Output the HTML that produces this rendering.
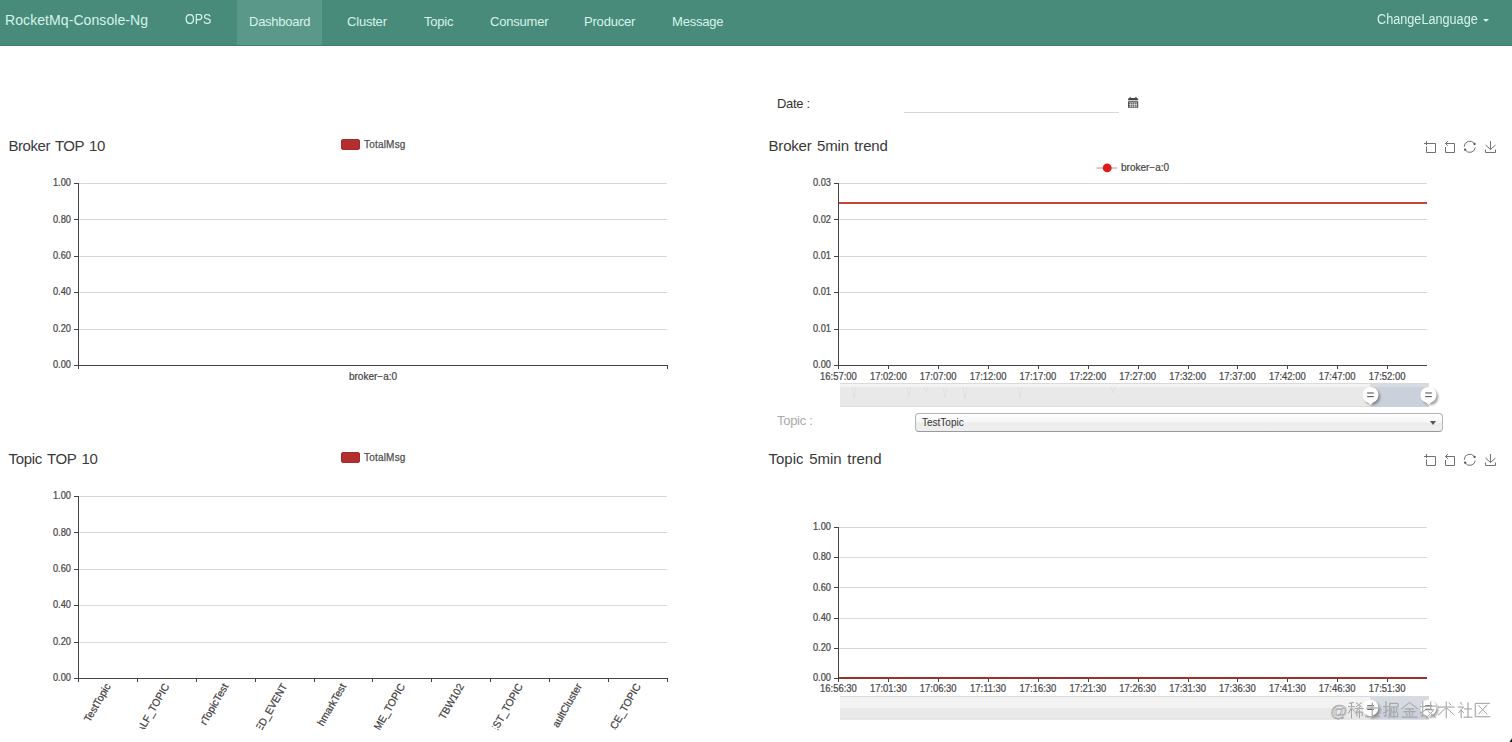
<!DOCTYPE html>
<html><head><meta charset="utf-8"><style>
html,body{margin:0;padding:0;background:#fff;}
body{width:1512px;height:742px;overflow:hidden;position:relative;font-family:'Liberation Sans', sans-serif;}
.nav{position:absolute;left:0;top:0;width:1512px;height:45px;background:#488b7a;border-bottom:1px solid #3f806d;}
.nav .act{position:absolute;left:237px;top:0;width:85px;height:45px;background:#5a9889;}
.t{position:absolute;white-space:nowrap;line-height:1;}
.nt{color:#d6f4ea;font-size:13px;}
.title{color:#3a3a3a;font-size:15px;}
.lg{color:#505050;font-size:10px;letter-spacing:0.2px;-webkit-text-stroke:0.25px #505050;}
</style></head><body>
<div class="nav"><div class="act"></div></div>
<div class="t nt" style="left:5px;top:12.5px;font-size:14px;letter-spacing:0.08px">RocketMq-Console-Ng</div>
<div class="t nt" style="left:185.4px;top:12.1px;font-size:14px;transform:scaleX(0.89);transform-origin:0 0">OPS</div>
<div class="t nt" style="left:249px;top:14.5px;letter-spacing:-0.25px">Dashboard</div>
<div class="t nt" style="left:347px;top:14.5px;letter-spacing:-0.2px">Cluster</div>
<div class="t nt" style="left:424px;top:14.5px;letter-spacing:-0.2px">Topic</div>
<div class="t nt" style="left:490px;top:14.5px;letter-spacing:-0.2px">Consumer</div>
<div class="t nt" style="left:584px;top:14.5px;letter-spacing:-0.2px">Producer</div>
<div class="t nt" style="left:672px;top:14.5px;letter-spacing:-0.2px">Message</div>
<div class="t nt" style="left:1377px;top:12px;font-size:14px;transform:scaleX(0.905);transform-origin:0 0">ChangeLanguage</div>
<div style="position:absolute;left:1483px;top:19px;width:0;height:0;border-left:3px solid transparent;border-right:3px solid transparent;border-top:3px solid #d6f4ea"></div>

<div class="t" style="left:777px;top:97px;font-size:13px;color:#333;letter-spacing:-0.3px">Date :</div>
<div style="position:absolute;left:904px;top:112px;width:215px;height:1px;background:#d8d8d8"></div>
<div class="t" style="left:8.5px;top:138.3px;letter-spacing:-0.45px;word-spacing:1.5px"><span class="title">Broker TOP 10</span></div>
<div class="t" style="left:768.5px;top:138.3px;letter-spacing:-0.18px;word-spacing:1.5px"><span class="title">Broker 5min trend</span></div>
<div class="t" style="left:8.5px;top:451.3px;letter-spacing:-0.33px;word-spacing:1.5px"><span class="title">Topic TOP 10</span></div>
<div class="t" style="left:768.5px;top:451.3px;word-spacing:1.5px"><span class="title">Topic 5min trend</span></div>
<div style="position:absolute;left:341px;top:139px;width:19px;height:11px;background:#b32e2e;box-shadow:inset 0 0 0 0.6px #9c2424;border-radius:3px"></div>
<div class="t lg" style="left:364px;top:140.2px">TotalMsg</div>
<div style="position:absolute;left:341px;top:452px;width:19px;height:11px;background:#b32e2e;box-shadow:inset 0 0 0 0.6px #9c2424;border-radius:3px"></div>
<div class="t lg" style="left:364px;top:453px">TotalMsg</div>
<div class="t" style="left:777px;top:414px;font-size:13px;color:#aaa;letter-spacing:-0.3px">Topic :</div>
<div style="position:absolute;left:915px;top:413px;width:526px;height:17px;border:1px solid #b4b4b4;border-bottom-color:#9a9a9a;border-radius:4px;background:linear-gradient(#fff 0%,#f6f6f6 45%,#ececec 55%,#efefef 100%)"></div>
<div class="t" style="left:922px;top:417.5px;font-size:10px;color:#333">TestTopic</div>
<div style="position:absolute;left:1429.5px;top:420.5px;width:0;height:0;border-left:3px solid transparent;border-right:3px solid transparent;border-top:4px solid #555"></div>
<svg width="1512" height="742" style="position:absolute;left:0;top:0" font-family="Liberation Sans, sans-serif"><line x1="79" y1="183.5" x2="667" y2="183.5" stroke="#d8d8d8" stroke-width="1"/><line x1="74" y1="183.5" x2="78" y2="183.5" stroke="#444" stroke-width="1"/><text transform="translate(71.00,186.20) scale(0.93,1)" text-anchor="end" font-size="10" fill="#4a4a4a" stroke="#4a4a4a" stroke-width="0.25" >1.00</text><line x1="79" y1="219.5" x2="667" y2="219.5" stroke="#d8d8d8" stroke-width="1"/><line x1="74" y1="219.5" x2="78" y2="219.5" stroke="#444" stroke-width="1"/><text transform="translate(71.00,222.60) scale(0.93,1)" text-anchor="end" font-size="10" fill="#4a4a4a" stroke="#4a4a4a" stroke-width="0.25" >0.80</text><line x1="79" y1="256.5" x2="667" y2="256.5" stroke="#d8d8d8" stroke-width="1"/><line x1="74" y1="256.5" x2="78" y2="256.5" stroke="#444" stroke-width="1"/><text transform="translate(71.00,259.00) scale(0.93,1)" text-anchor="end" font-size="10" fill="#4a4a4a" stroke="#4a4a4a" stroke-width="0.25" >0.60</text><line x1="79" y1="292.5" x2="667" y2="292.5" stroke="#d8d8d8" stroke-width="1"/><line x1="74" y1="292.5" x2="78" y2="292.5" stroke="#444" stroke-width="1"/><text transform="translate(71.00,295.40) scale(0.93,1)" text-anchor="end" font-size="10" fill="#4a4a4a" stroke="#4a4a4a" stroke-width="0.25" >0.40</text><line x1="79" y1="329.5" x2="667" y2="329.5" stroke="#d8d8d8" stroke-width="1"/><line x1="74" y1="329.5" x2="78" y2="329.5" stroke="#444" stroke-width="1"/><text transform="translate(71.00,331.80) scale(0.93,1)" text-anchor="end" font-size="10" fill="#4a4a4a" stroke="#4a4a4a" stroke-width="0.25" >0.20</text><line x1="74" y1="365.5" x2="78" y2="365.5" stroke="#444" stroke-width="1"/><text transform="translate(71.00,368.20) scale(0.93,1)" text-anchor="end" font-size="10" fill="#4a4a4a" stroke="#4a4a4a" stroke-width="0.25" >0.00</text><line x1="78.5" y1="183" x2="78.5" y2="365.5" stroke="#444" stroke-width="1"/><line x1="78" y1="365.5" x2="667" y2="365.5" stroke="#444" stroke-width="1"/><line x1="78.5" y1="365" x2="78.5" y2="369" stroke="#444"/><line x1="667.5" y1="365" x2="667.5" y2="369" stroke="#444"/><text x="373" y="379.5" text-anchor="middle" font-size="10" fill="#444" stroke="#444" stroke-width="0.2">broker−a:0</text><line x1="79" y1="496.5" x2="667" y2="496.5" stroke="#d8d8d8" stroke-width="1"/><line x1="74" y1="496.5" x2="78" y2="496.5" stroke="#444" stroke-width="1"/><text transform="translate(71.00,499.20) scale(0.93,1)" text-anchor="end" font-size="10" fill="#4a4a4a" stroke="#4a4a4a" stroke-width="0.25" >1.00</text><line x1="79" y1="532.5" x2="667" y2="532.5" stroke="#d8d8d8" stroke-width="1"/><line x1="74" y1="532.5" x2="78" y2="532.5" stroke="#444" stroke-width="1"/><text transform="translate(71.00,535.60) scale(0.93,1)" text-anchor="end" font-size="10" fill="#4a4a4a" stroke="#4a4a4a" stroke-width="0.25" >0.80</text><line x1="79" y1="569.5" x2="667" y2="569.5" stroke="#d8d8d8" stroke-width="1"/><line x1="74" y1="569.5" x2="78" y2="569.5" stroke="#444" stroke-width="1"/><text transform="translate(71.00,572.00) scale(0.93,1)" text-anchor="end" font-size="10" fill="#4a4a4a" stroke="#4a4a4a" stroke-width="0.25" >0.60</text><line x1="79" y1="605.5" x2="667" y2="605.5" stroke="#d8d8d8" stroke-width="1"/><line x1="74" y1="605.5" x2="78" y2="605.5" stroke="#444" stroke-width="1"/><text transform="translate(71.00,608.40) scale(0.93,1)" text-anchor="end" font-size="10" fill="#4a4a4a" stroke="#4a4a4a" stroke-width="0.25" >0.40</text><line x1="79" y1="642.5" x2="667" y2="642.5" stroke="#d8d8d8" stroke-width="1"/><line x1="74" y1="642.5" x2="78" y2="642.5" stroke="#444" stroke-width="1"/><text transform="translate(71.00,644.80) scale(0.93,1)" text-anchor="end" font-size="10" fill="#4a4a4a" stroke="#4a4a4a" stroke-width="0.25" >0.20</text><line x1="74" y1="678.5" x2="78" y2="678.5" stroke="#444" stroke-width="1"/><text transform="translate(71.00,681.20) scale(0.93,1)" text-anchor="end" font-size="10" fill="#4a4a4a" stroke="#4a4a4a" stroke-width="0.25" >0.00</text><line x1="78.5" y1="496" x2="78.5" y2="678.5" stroke="#444" stroke-width="1"/><line x1="78" y1="678.5" x2="667" y2="678.5" stroke="#444" stroke-width="1"/><defs><filter id="bl" x="-50%" y="-50%" width="200%" height="200%"><feGaussianBlur stdDeviation="1.1"/></filter><clipPath id="lc"><rect x="-52.5" y="-12" width="53.5" height="24"/></clipPath></defs><line x1="78.5" y1="678" x2="78.5" y2="682" stroke="#444"/><line x1="137.5" y1="678" x2="137.5" y2="682" stroke="#444"/><line x1="196.5" y1="678" x2="196.5" y2="682" stroke="#444"/><line x1="255.5" y1="678" x2="255.5" y2="682" stroke="#444"/><line x1="314.5" y1="678" x2="314.5" y2="682" stroke="#444"/><line x1="372.5" y1="678" x2="372.5" y2="682" stroke="#444"/><line x1="431.5" y1="678" x2="431.5" y2="682" stroke="#444"/><line x1="490.5" y1="678" x2="490.5" y2="682" stroke="#444"/><line x1="549.5" y1="678" x2="549.5" y2="682" stroke="#444"/><line x1="608.5" y1="678" x2="608.5" y2="682" stroke="#444"/><line x1="667.5" y1="678" x2="667.5" y2="682" stroke="#444"/><g transform="translate(107.7,684.2) rotate(-60) scale(0.97,1)"><g clip-path="url(#lc)"><text x="0" y="3.8" text-anchor="end" font-size="10.5" fill="#404040" stroke="#404040" stroke-width="0.22">TestTopic</text></g></g><g transform="translate(166.5,684.2) rotate(-60) scale(0.97,1)"><g clip-path="url(#lc)"><text x="0" y="3.8" text-anchor="end" font-size="10.5" fill="#404040" stroke="#404040" stroke-width="0.22">RMQ_SYS_TRANS_HALF_TOPIC</text></g></g><g transform="translate(225.4,684.2) rotate(-60) scale(0.97,1)"><g clip-path="url(#lc)"><text x="0" y="3.8" text-anchor="end" font-size="10.5" fill="#404040" stroke="#404040" stroke-width="0.22">rTopicTest</text></g></g><g transform="translate(284.3,684.2) rotate(-60) scale(0.97,1)"><g clip-path="url(#lc)"><text x="0" y="3.8" text-anchor="end" font-size="10.5" fill="#404040" stroke="#404040" stroke-width="0.22">OFFSET_MOVED_EVENT</text></g></g><g transform="translate(343.2,684.2) rotate(-60) scale(0.97,1)"><g clip-path="url(#lc)"><text x="0" y="3.8" text-anchor="end" font-size="10.5" fill="#404040" stroke="#404040" stroke-width="0.22">hmarkTest</text></g></g><g transform="translate(402.1,684.2) rotate(-60) scale(0.97,1)"><g clip-path="url(#lc)"><text x="0" y="3.8" text-anchor="end" font-size="10.5" fill="#404040" stroke="#404040" stroke-width="0.22">SCHEDULE_TIME_TOPIC</text></g></g><g transform="translate(461.0,684.2) rotate(-60) scale(0.97,1)"><g clip-path="url(#lc)"><text x="0" y="3.8" text-anchor="end" font-size="10.5" fill="#404040" stroke="#404040" stroke-width="0.22">TBW102</text></g></g><g transform="translate(520.0,684.2) rotate(-60) scale(0.97,1)"><g clip-path="url(#lc)"><text x="0" y="3.8" text-anchor="end" font-size="10.5" fill="#404040" stroke="#404040" stroke-width="0.22">SELF_TEST_TOPIC</text></g></g><g transform="translate(578.9,684.2) rotate(-60) scale(0.97,1)"><g clip-path="url(#lc)"><text x="0" y="3.8" text-anchor="end" font-size="10.5" fill="#404040" stroke="#404040" stroke-width="0.22">aultCluster</text></g></g><g transform="translate(637.8,684.2) rotate(-60) scale(0.97,1)"><g clip-path="url(#lc)"><text x="0" y="3.8" text-anchor="end" font-size="10.5" fill="#404040" stroke="#404040" stroke-width="0.22">RMQ_SYS_TRACE_TOPIC</text></g></g><line x1="839" y1="183.5" x2="1427" y2="183.5" stroke="#d8d8d8" stroke-width="1"/><line x1="834" y1="183.5" x2="838" y2="183.5" stroke="#444" stroke-width="1"/><text transform="translate(831.00,186.20) scale(0.93,1)" text-anchor="end" font-size="10" fill="#4a4a4a" stroke="#4a4a4a" stroke-width="0.25" >0.03</text><line x1="839" y1="219.5" x2="1427" y2="219.5" stroke="#d8d8d8" stroke-width="1"/><line x1="834" y1="219.5" x2="838" y2="219.5" stroke="#444" stroke-width="1"/><text transform="translate(831.00,222.60) scale(0.93,1)" text-anchor="end" font-size="10" fill="#4a4a4a" stroke="#4a4a4a" stroke-width="0.25" >0.02</text><line x1="839" y1="256.5" x2="1427" y2="256.5" stroke="#d8d8d8" stroke-width="1"/><line x1="834" y1="256.5" x2="838" y2="256.5" stroke="#444" stroke-width="1"/><text transform="translate(831.00,259.00) scale(0.93,1)" text-anchor="end" font-size="10" fill="#4a4a4a" stroke="#4a4a4a" stroke-width="0.25" >0.01</text><line x1="839" y1="292.5" x2="1427" y2="292.5" stroke="#d8d8d8" stroke-width="1"/><line x1="834" y1="292.5" x2="838" y2="292.5" stroke="#444" stroke-width="1"/><text transform="translate(831.00,295.40) scale(0.93,1)" text-anchor="end" font-size="10" fill="#4a4a4a" stroke="#4a4a4a" stroke-width="0.25" >0.01</text><line x1="839" y1="329.5" x2="1427" y2="329.5" stroke="#d8d8d8" stroke-width="1"/><line x1="834" y1="329.5" x2="838" y2="329.5" stroke="#444" stroke-width="1"/><text transform="translate(831.00,331.80) scale(0.93,1)" text-anchor="end" font-size="10" fill="#4a4a4a" stroke="#4a4a4a" stroke-width="0.25" >0.01</text><line x1="834" y1="365.5" x2="838" y2="365.5" stroke="#444" stroke-width="1"/><text transform="translate(831.00,368.20) scale(0.93,1)" text-anchor="end" font-size="10" fill="#4a4a4a" stroke="#4a4a4a" stroke-width="0.25" >0.00</text><line x1="838.5" y1="183" x2="838.5" y2="365.5" stroke="#444" stroke-width="1"/><line x1="838" y1="365.5" x2="1427" y2="365.5" stroke="#444" stroke-width="1"/><line x1="838.5" y1="365" x2="838.5" y2="369" stroke="#444"/><text transform="translate(838.40,379.80) scale(0.9,1)" text-anchor="middle" font-size="10.5" fill="#4a4a4a" stroke="#4a4a4a" stroke-width="0.25" >16:57:00</text><line x1="888.5" y1="365" x2="888.5" y2="369" stroke="#444"/><text transform="translate(888.28,379.80) scale(0.9,1)" text-anchor="middle" font-size="10.5" fill="#4a4a4a" stroke="#4a4a4a" stroke-width="0.25" >17:02:00</text><line x1="938.5" y1="365" x2="938.5" y2="369" stroke="#444"/><text transform="translate(938.16,379.80) scale(0.9,1)" text-anchor="middle" font-size="10.5" fill="#4a4a4a" stroke="#4a4a4a" stroke-width="0.25" >17:07:00</text><line x1="988.5" y1="365" x2="988.5" y2="369" stroke="#444"/><text transform="translate(988.04,379.80) scale(0.9,1)" text-anchor="middle" font-size="10.5" fill="#4a4a4a" stroke="#4a4a4a" stroke-width="0.25" >17:12:00</text><line x1="1038.5" y1="365" x2="1038.5" y2="369" stroke="#444"/><text transform="translate(1037.92,379.80) scale(0.9,1)" text-anchor="middle" font-size="10.5" fill="#4a4a4a" stroke="#4a4a4a" stroke-width="0.25" >17:17:00</text><line x1="1088.5" y1="365" x2="1088.5" y2="369" stroke="#444"/><text transform="translate(1087.80,379.80) scale(0.9,1)" text-anchor="middle" font-size="10.5" fill="#4a4a4a" stroke="#4a4a4a" stroke-width="0.25" >17:22:00</text><line x1="1138.5" y1="365" x2="1138.5" y2="369" stroke="#444"/><text transform="translate(1137.68,379.80) scale(0.9,1)" text-anchor="middle" font-size="10.5" fill="#4a4a4a" stroke="#4a4a4a" stroke-width="0.25" >17:27:00</text><line x1="1188.5" y1="365" x2="1188.5" y2="369" stroke="#444"/><text transform="translate(1187.56,379.80) scale(0.9,1)" text-anchor="middle" font-size="10.5" fill="#4a4a4a" stroke="#4a4a4a" stroke-width="0.25" >17:32:00</text><line x1="1237.5" y1="365" x2="1237.5" y2="369" stroke="#444"/><text transform="translate(1237.44,379.80) scale(0.9,1)" text-anchor="middle" font-size="10.5" fill="#4a4a4a" stroke="#4a4a4a" stroke-width="0.25" >17:37:00</text><line x1="1287.5" y1="365" x2="1287.5" y2="369" stroke="#444"/><text transform="translate(1287.32,379.80) scale(0.9,1)" text-anchor="middle" font-size="10.5" fill="#4a4a4a" stroke="#4a4a4a" stroke-width="0.25" >17:42:00</text><line x1="1337.5" y1="365" x2="1337.5" y2="369" stroke="#444"/><text transform="translate(1337.20,379.80) scale(0.9,1)" text-anchor="middle" font-size="10.5" fill="#4a4a4a" stroke="#4a4a4a" stroke-width="0.25" >17:47:00</text><line x1="1387.5" y1="365" x2="1387.5" y2="369" stroke="#444"/><text transform="translate(1387.08,379.80) scale(0.9,1)" text-anchor="middle" font-size="10.5" fill="#4a4a4a" stroke="#4a4a4a" stroke-width="0.25" >17:52:00</text><line x1="839" y1="203" x2="1427" y2="203" stroke="#c4463e" stroke-width="2"/><line x1="1096.5" y1="168" x2="1117" y2="168" stroke="#d49090" stroke-width="1.1"/><circle cx="1107.2" cy="167.9" r="4.45" fill="#dd1c1c"/><text x="1121" y="171.3" font-size="10" fill="#444" stroke="#444" stroke-width="0.2">broker−a:0</text><rect x="840" y="383" width="588" height="24" fill="#e9e9e9"/><rect x="840" y="383" width="588" height="4" fill="#f3f3f3"/><line x1="840" y1="383.5" x2="1428" y2="383.5" stroke="#dadada"/><line x1="840" y1="406.5" x2="1428" y2="406.5" stroke="#dcdcdc"/><path d="M852 387 L854 398 L856 387" fill="none" stroke="#dadada" stroke-width="0.6"/><path d="M907 387 L909 397 L911 387" fill="none" stroke="#dadada" stroke-width="0.6"/><path d="M924 387 L926 393 L928 387" fill="none" stroke="#dadada" stroke-width="0.6"/><path d="M943 387 L945 397 L947 387" fill="none" stroke="#dadada" stroke-width="0.6"/><path d="M963 387 L965 399 L967 387" fill="none" stroke="#dadada" stroke-width="0.6"/><path d="M1018 387 L1020 397 L1022 387" fill="none" stroke="#dadada" stroke-width="0.6"/><path d="M1111 387 L1113 393 L1115 387" fill="none" stroke="#dadada" stroke-width="0.6"/><rect x="1370.5" y="383" width="58.5" height="24" fill="#cbd1db"/><rect x="1370.5" y="383" width="58.5" height="4" fill="#d6dae1"/><g transform="translate(1370.5,395.0)"><circle cx="1.8" cy="2" r="8" fill="#444" opacity="0.5" filter="url(#bl)"/><path d="M-8 0 A8 8 0 1 1 2.2 7.7 L0 10 L-2.2 7.7 A8 8 0 0 1 -8 0Z" fill="#fff"/><line x1="-3.3" y1="-2" x2="3.3" y2="-2" stroke="#5a5a5a" stroke-width="1.1"/><line x1="-3.3" y1="1.6" x2="3.3" y2="1.6" stroke="#5a5a5a" stroke-width="1.1"/></g><g transform="translate(1428.5,395.0)"><circle cx="1.8" cy="2" r="8" fill="#444" opacity="0.5" filter="url(#bl)"/><path d="M-8 0 A8 8 0 1 1 2.2 7.7 L0 10 L-2.2 7.7 A8 8 0 0 1 -8 0Z" fill="#fff"/><line x1="-3.3" y1="-2" x2="3.3" y2="-2" stroke="#5a5a5a" stroke-width="1.1"/><line x1="-3.3" y1="1.6" x2="3.3" y2="1.6" stroke="#5a5a5a" stroke-width="1.1"/></g><line x1="839" y1="527.5" x2="1427" y2="527.5" stroke="#d8d8d8" stroke-width="1"/><line x1="834" y1="527.5" x2="838" y2="527.5" stroke="#444" stroke-width="1"/><text transform="translate(831.00,530.20) scale(0.93,1)" text-anchor="end" font-size="10" fill="#4a4a4a" stroke="#4a4a4a" stroke-width="0.25" >1.00</text><line x1="839" y1="557.5" x2="1427" y2="557.5" stroke="#d8d8d8" stroke-width="1"/><line x1="834" y1="557.5" x2="838" y2="557.5" stroke="#444" stroke-width="1"/><text transform="translate(831.00,560.40) scale(0.93,1)" text-anchor="end" font-size="10" fill="#4a4a4a" stroke="#4a4a4a" stroke-width="0.25" >0.80</text><line x1="839" y1="587.5" x2="1427" y2="587.5" stroke="#d8d8d8" stroke-width="1"/><line x1="834" y1="587.5" x2="838" y2="587.5" stroke="#444" stroke-width="1"/><text transform="translate(831.00,590.60) scale(0.93,1)" text-anchor="end" font-size="10" fill="#4a4a4a" stroke="#4a4a4a" stroke-width="0.25" >0.60</text><line x1="839" y1="618.5" x2="1427" y2="618.5" stroke="#d8d8d8" stroke-width="1"/><line x1="834" y1="618.5" x2="838" y2="618.5" stroke="#444" stroke-width="1"/><text transform="translate(831.00,620.80) scale(0.93,1)" text-anchor="end" font-size="10" fill="#4a4a4a" stroke="#4a4a4a" stroke-width="0.25" >0.40</text><line x1="839" y1="648.5" x2="1427" y2="648.5" stroke="#d8d8d8" stroke-width="1"/><line x1="834" y1="648.5" x2="838" y2="648.5" stroke="#444" stroke-width="1"/><text transform="translate(831.00,651.00) scale(0.93,1)" text-anchor="end" font-size="10" fill="#4a4a4a" stroke="#4a4a4a" stroke-width="0.25" >0.20</text><line x1="834" y1="678.5" x2="838" y2="678.5" stroke="#444" stroke-width="1"/><text transform="translate(831.00,681.20) scale(0.93,1)" text-anchor="end" font-size="10" fill="#4a4a4a" stroke="#4a4a4a" stroke-width="0.25" >0.00</text><line x1="838.5" y1="527" x2="838.5" y2="678.5" stroke="#444" stroke-width="1"/><line x1="838" y1="678.5" x2="1427" y2="678.5" stroke="#444" stroke-width="1"/><line x1="838.5" y1="678" x2="838.5" y2="682" stroke="#444"/><text transform="translate(838.40,692.20) scale(0.9,1)" text-anchor="middle" font-size="10.5" fill="#4a4a4a" stroke="#4a4a4a" stroke-width="0.25" >16:56:30</text><line x1="888.5" y1="678" x2="888.5" y2="682" stroke="#444"/><text transform="translate(888.28,692.20) scale(0.9,1)" text-anchor="middle" font-size="10.5" fill="#4a4a4a" stroke="#4a4a4a" stroke-width="0.25" >17:01:30</text><line x1="938.5" y1="678" x2="938.5" y2="682" stroke="#444"/><text transform="translate(938.16,692.20) scale(0.9,1)" text-anchor="middle" font-size="10.5" fill="#4a4a4a" stroke="#4a4a4a" stroke-width="0.25" >17:06:30</text><line x1="988.5" y1="678" x2="988.5" y2="682" stroke="#444"/><text transform="translate(988.04,692.20) scale(0.9,1)" text-anchor="middle" font-size="10.5" fill="#4a4a4a" stroke="#4a4a4a" stroke-width="0.25" >17:11:30</text><line x1="1038.5" y1="678" x2="1038.5" y2="682" stroke="#444"/><text transform="translate(1037.92,692.20) scale(0.9,1)" text-anchor="middle" font-size="10.5" fill="#4a4a4a" stroke="#4a4a4a" stroke-width="0.25" >17:16:30</text><line x1="1088.5" y1="678" x2="1088.5" y2="682" stroke="#444"/><text transform="translate(1087.80,692.20) scale(0.9,1)" text-anchor="middle" font-size="10.5" fill="#4a4a4a" stroke="#4a4a4a" stroke-width="0.25" >17:21:30</text><line x1="1138.5" y1="678" x2="1138.5" y2="682" stroke="#444"/><text transform="translate(1137.68,692.20) scale(0.9,1)" text-anchor="middle" font-size="10.5" fill="#4a4a4a" stroke="#4a4a4a" stroke-width="0.25" >17:26:30</text><line x1="1188.5" y1="678" x2="1188.5" y2="682" stroke="#444"/><text transform="translate(1187.56,692.20) scale(0.9,1)" text-anchor="middle" font-size="10.5" fill="#4a4a4a" stroke="#4a4a4a" stroke-width="0.25" >17:31:30</text><line x1="1237.5" y1="678" x2="1237.5" y2="682" stroke="#444"/><text transform="translate(1237.44,692.20) scale(0.9,1)" text-anchor="middle" font-size="10.5" fill="#4a4a4a" stroke="#4a4a4a" stroke-width="0.25" >17:36:30</text><line x1="1287.5" y1="678" x2="1287.5" y2="682" stroke="#444"/><text transform="translate(1287.32,692.20) scale(0.9,1)" text-anchor="middle" font-size="10.5" fill="#4a4a4a" stroke="#4a4a4a" stroke-width="0.25" >17:41:30</text><line x1="1337.5" y1="678" x2="1337.5" y2="682" stroke="#444"/><text transform="translate(1337.20,692.20) scale(0.9,1)" text-anchor="middle" font-size="10.5" fill="#4a4a4a" stroke="#4a4a4a" stroke-width="0.25" >17:46:30</text><line x1="1387.5" y1="678" x2="1387.5" y2="682" stroke="#444"/><text transform="translate(1387.08,692.20) scale(0.9,1)" text-anchor="middle" font-size="10.5" fill="#4a4a4a" stroke="#4a4a4a" stroke-width="0.25" >17:51:30</text><line x1="839" y1="677.8" x2="1427" y2="677.8" stroke="#a8302a" stroke-width="1.8"/><rect x="840" y="696" width="588" height="23.5" fill="#e9e9e9"/><rect x="840" y="696" width="588" height="12" fill="#f3f3f3"/><line x1="840" y1="696.5" x2="1428" y2="696.5" stroke="#dadada"/><line x1="840" y1="719.0" x2="1428" y2="719.0" stroke="#dcdcdc"/><rect x="1370.5" y="696" width="58.5" height="23.5" fill="#cbd1db"/><rect x="1370.5" y="696" width="58.5" height="12" fill="#d6dae1"/><g transform="translate(1370.5,707.75)"><circle cx="1.8" cy="2" r="8" fill="#444" opacity="0.5" filter="url(#bl)"/><path d="M-8 0 A8 8 0 1 1 2.2 7.7 L0 10 L-2.2 7.7 A8 8 0 0 1 -8 0Z" fill="#fff"/><line x1="-3.3" y1="-2" x2="3.3" y2="-2" stroke="#5a5a5a" stroke-width="1.1"/><line x1="-3.3" y1="1.6" x2="3.3" y2="1.6" stroke="#5a5a5a" stroke-width="1.1"/></g><g transform="translate(1428.5,707.75)"><circle cx="1.8" cy="2" r="8" fill="#444" opacity="0.5" filter="url(#bl)"/><path d="M-8 0 A8 8 0 1 1 2.2 7.7 L0 10 L-2.2 7.7 A8 8 0 0 1 -8 0Z" fill="#fff"/><line x1="-3.3" y1="-2" x2="3.3" y2="-2" stroke="#5a5a5a" stroke-width="1.1"/><line x1="-3.3" y1="1.6" x2="3.3" y2="1.6" stroke="#5a5a5a" stroke-width="1.1"/></g><g transform="translate(0,0)" fill="none" stroke="#6a6a6a" stroke-width="0.95"><path d="M1424 143.5 H1435.5 V152.5 H1426.5 V146.5 M1426.5 141 V145"/><path d="M1445.5 143.5 H1454.5 V152.5 H1445.5 V147 M1445.5 143.5 L1447.8 141.2 M1445.5 143.5 L1447.8 145.8"/><path d="M1464.2 146.8 A5.6 5.6 0 0 1 1474.4 143.6 M1475.3 147.6 A5.6 5.6 0 0 1 1465.2 150"/><path d="M1490.5 141 V149.5 M1485.5 145 L1490.5 149.5 L1495.5 145 M1485.5 149.5 V152.5 H1495.5 V149.5"/></g><g transform="translate(0,0)" fill="#555"><circle cx="1474.6" cy="144" r="1.15"/><circle cx="1465.1" cy="149.7" r="1.15"/></g><g transform="translate(0,313)" fill="none" stroke="#6a6a6a" stroke-width="0.95"><path d="M1424 143.5 H1435.5 V152.5 H1426.5 V146.5 M1426.5 141 V145"/><path d="M1445.5 143.5 H1454.5 V152.5 H1445.5 V147 M1445.5 143.5 L1447.8 141.2 M1445.5 143.5 L1447.8 145.8"/><path d="M1464.2 146.8 A5.6 5.6 0 0 1 1474.4 143.6 M1475.3 147.6 A5.6 5.6 0 0 1 1465.2 150"/><path d="M1490.5 141 V149.5 M1485.5 145 L1490.5 149.5 L1495.5 145 M1485.5 149.5 V152.5 H1495.5 V149.5"/></g><g transform="translate(0,313)" fill="#555"><circle cx="1474.6" cy="144" r="1.15"/><circle cx="1465.1" cy="149.7" r="1.15"/></g><g fill="#444"><path d="M1128 99.5 Q1128 98 1129.5 98 L1130 96.6 L1131 98 L1135 98 L1136 96.6 L1136.7 98 Q1138.2 98 1138.2 99.5 V100.3 H1128Z"/><rect x="1128" y="101.2" width="10.2" height="6.6" rx="0.6"/></g><g stroke="#fff" stroke-width="0.55"><line x1="1128.8" y1="102.8" x2="1137.4" y2="102.8"/><line x1="1128.8" y1="104.5" x2="1137.4" y2="104.5"/><line x1="1128.8" y1="106.2" x2="1137.4" y2="106.2"/><line x1="1130.3" y1="102.5" x2="1130.3" y2="107.3"/><line x1="1132.4" y1="102.5" x2="1132.4" y2="107.3"/><line x1="1134.5" y1="102.5" x2="1134.5" y2="107.3"/><line x1="1136.3" y1="102.5" x2="1136.3" y2="107.3"/></g><g fill="none" stroke-linecap="square"><path transform="translate(1348.6,702) scale(0.97,0.92)" d="M1 1.5 L5 0.5 M0 5 H6 M3 1 V17 M3 6 L0 12 M3.5 7 L6 10 M8 1 L13 5 M13 1 L8 5 M7 7 H15 M11.5 5 L7 12 M8.5 11 V15 M8.5 11 H14 V15 M11.2 9 V17" stroke="#828282" stroke-width="1.0"/><path transform="translate(1348.6,702) scale(0.97,0.92)" d="M1 1.5 L5 0.5 M0 5 H6 M3 1 V17 M3 6 L0 12 M3.5 7 L6 10 M8 1 L13 5 M13 1 L8 5 M7 7 H15 M11.5 5 L7 12 M8.5 11 V15 M8.5 11 H14 V15 M11.2 9 V17" stroke="#f6f6f6" stroke-width="0.28"/><path transform="translate(1365,702) scale(0.97,0.92)" d="M2 6.5 H13 M7.5 1 V16 M0.5 16 H15" stroke="#828282" stroke-width="1.0"/><path transform="translate(1365,702) scale(0.97,0.92)" d="M2 6.5 H13 M7.5 1 V16 M0.5 16 H15" stroke="#f6f6f6" stroke-width="0.28"/><path transform="translate(1383.5,702) scale(0.97,0.92)" d="M0 5 H5 M2.5 0 V16 L1 15 M0 12 L5 9 M6.5 1.5 H15 V5.5 H6.5 M6.5 1.5 V11 L5.5 17 M10.7 6 V16 M8 7.5 V11 H13.5 V7.5 M7.5 12 V16 H14.5 V12" stroke="#828282" stroke-width="1.0"/><path transform="translate(1383.5,702) scale(0.97,0.92)" d="M0 5 H5 M2.5 0 V16 L1 15 M0 12 L5 9 M6.5 1.5 H15 V5.5 H6.5 M6.5 1.5 V11 L5.5 17 M10.7 6 V16 M8 7.5 V11 H13.5 V7.5 M7.5 12 V16 H14.5 V12" stroke="#f6f6f6" stroke-width="0.28"/><path transform="translate(1401.3,702) scale(0.97,0.92)" d="M8.5 0.5 L0.5 7 M8.5 0.5 L16.5 7 M4.5 7.5 H12.5 M3 10.5 H14 M8.5 7.5 V16 M5 12 L6 14.5 M12 12 L11 14.5 M1 16.5 H16" stroke="#828282" stroke-width="1.0"/><path transform="translate(1401.3,702) scale(0.97,0.92)" d="M8.5 0.5 L0.5 7 M8.5 0.5 L16.5 7 M4.5 7.5 H12.5 M3 10.5 H14 M8.5 7.5 V16 M5 12 L6 14.5 M12 12 L11 14.5 M1 16.5 H16" stroke="#f6f6f6" stroke-width="0.28"/><path transform="translate(1420.3,702) scale(0.97,0.92)" d="M0 5 H5 M2.5 0 V16 L1 15 M0 12 L5 9 M6 4.5 H15.5 M10.7 0 V8 M7 8.5 H14 L6.5 17 M8.5 10.5 L15.5 17" stroke="#828282" stroke-width="1.0"/><path transform="translate(1420.3,702) scale(0.97,0.92)" d="M0 5 H5 M2.5 0 V16 L1 15 M0 12 L5 9 M6 4.5 H15.5 M10.7 0 V8 M7 8.5 H14 L6.5 17 M8.5 10.5 L15.5 17" stroke="#f6f6f6" stroke-width="0.28"/><path transform="translate(1438,702) scale(0.97,0.92)" d="M0.5 5.5 H16.5 M8.5 0 V17 M8.5 6 L0.5 14 M8.5 6 L16.5 14 M11.5 1 L13 3" stroke="#828282" stroke-width="1.0"/><path transform="translate(1438,702) scale(0.97,0.92)" d="M0.5 5.5 H16.5 M8.5 0 V17 M8.5 6 L0.5 14 M8.5 6 L16.5 14 M11.5 1 L13 3" stroke="#f6f6f6" stroke-width="0.28"/><path transform="translate(1457.8,702) scale(0.97,0.92)" d="M3 0.5 L4 2.5 M0.5 5.5 H6 L1 11.5 M3.5 8.5 V17 M4 9.5 L6 11.5 M7 7.5 H14 M10.5 1 V16.5 M6.5 16.5 H14.5" stroke="#828282" stroke-width="1.0"/><path transform="translate(1457.8,702) scale(0.97,0.92)" d="M3 0.5 L4 2.5 M0.5 5.5 H6 L1 11.5 M3.5 8.5 V17 M4 9.5 L6 11.5 M7 7.5 H14 M10.5 1 V16.5 M6.5 16.5 H14.5" stroke="#f6f6f6" stroke-width="0.28"/><path transform="translate(1474.3,702) scale(0.97,0.92)" d="M15.5 1.5 H1 V16 H16 M4.5 4 L13 13 M13 3.5 L4.5 13" stroke="#828282" stroke-width="1.0"/><path transform="translate(1474.3,702) scale(0.97,0.92)" d="M15.5 1.5 H1 V16 H16 M4.5 4 L13 13 M13 3.5 L4.5 13" stroke="#f6f6f6" stroke-width="0.28"/></g><text x="1330.3" y="716.8" font-size="17" fill="#fafafa" stroke="#8c8c8c" stroke-width="0.55">@</text><path d="M1509.3 742 L1512 738.3 V742Z" fill="#222"/></svg>
</body></html>
